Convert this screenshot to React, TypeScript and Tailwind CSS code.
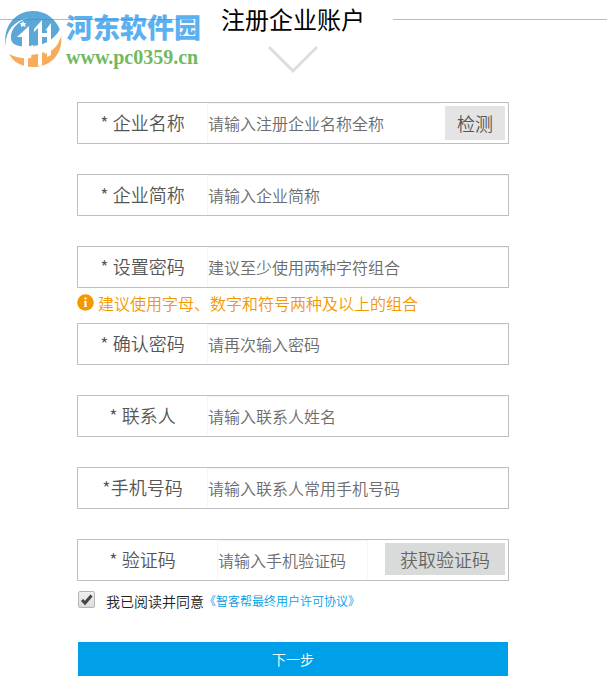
import type { ReactNode } from 'react'

type FieldProps = {
  id: string
  label: string
  placeholder: string
  type?: string
  short?: boolean
  children?: ReactNode
}

function Field({ id, label, placeholder, type = 'text', short = false, children }: FieldProps) {
  return (
    <div className="flex h-[42px] items-stretch border border-[#bfbfbf] bg-white">
      <label
        htmlFor={id}
        className={`flex w-[129px] shrink-0 items-center justify-center pb-0.5 text-lg text-[#555] ${short ? 'mr-[10px]' : ''}`}
      >
        {label}
      </label>
      <input
        id={id}
        type={type}
        placeholder={placeholder}
        className={`min-w-0 rounded-xs border-t border-l border-[#f5f5f5] pb-0.5 text-base text-[#555] outline-none placeholder:text-[#6c6c6c] ${short ? 'w-[151px] border-r' : 'flex-1'}`}
      />
      {children}
    </div>
  )
}

function SiteLogo() {
  return (
    <a href="#" className="absolute top-[11px] left-[5px] flex items-start">
      <svg width="57" height="57" viewBox="0 0 57 57" aria-hidden>
        {/* sky half */}
        <path d="M1 36C-3 16 10 0 28 0C41 0 51 8 55 19C53 27 47 34 36 37C22 41 8 41 1 36Z" fill="#5aa7d8" />
        {/* ground half */}
        <path d="M4 43C12 47 19 48 26 47L28 34H37L40 43C50 39 55 32 56 23C59 42 46 56 28 56C17 56 8 51 4 43Z" fill="#f7ac5c" />
        {/* left swoosh */}
        <path d="M23 7C11 11 5 20 6 28C7 35 16 36 25 35L28 34V41C21 43 8 44 1 37C-1 22 8 10 23 7Z" fill="#fff" />
        {/* river bend */}
        <path d="M24 36C36 35 49 30 55 18L57 23C54 34 45 42 26 44Z" fill="#fff" />
        {/* towers */}
        <path d="M17 37V26H12L24 15V37Z" fill="#fff" />
        <path d="M33 55V17L29 21V18L37 9V22H42V19L40 20L46 12V44L42 46V26H37V55Z" fill="#fff" />
        <path d="M19 44H23V57H19Z" fill="#fff" />
        <path d="M18 10L19 12L21 12L20 14L21 16L18 15L16 16L16 14L15 12H17Z" fill="#fff" />
      </svg>
      <span className="ml-1 flex flex-col">
        <span className="h-[34px] text-[27px] leading-[32px] font-black text-[#5db0f0]">河东软件园</span>
        <span className="font-['Liberation_Serif'] text-xl leading-6 font-bold text-[#71b95f]">www.pc0359.cn</span>
      </span>
    </a>
  )
}

export default function App() {
  return (
    <main className="relative bg-white pr-[21px] pb-5 font-['Noto_Sans_CJK_SC',sans-serif] font-[350]">
      <SiteLogo />
      <header>
        <div className="flex h-[38px] items-center">
          <div className="relative h-px flex-1 bg-[#777]/50" />
          <h1 className="w-[200px] text-center text-2xl leading-[38px] font-normal text-black">注册企业账户</h1>
          <div className="flex-1">
            <div className="-mr-[21px] h-px bg-[#bbb]" />
          </div>
        </div>
        <svg className="mx-auto mt-1.5" width="50" height="30" viewBox="0 0 50 30" aria-hidden>
          <path d="M1 3L25 27L49 3" fill="none" stroke="#ddd" strokeWidth="3" />
        </svg>
      </header>

      <form className="mx-auto mt-7 max-w-[432px]">
        <div className="flex flex-col gap-[30px]">
          <Field id="company" label="* 企业名称" placeholder="请输入注册企业名称全称">
            <button type="button" className="m-[3px] w-[60px] bg-[#e4e4e4] text-lg leading-none text-[#555]">
              检测
            </button>
          </Field>
          <Field id="short-name" label="* 企业简称" placeholder="请输入企业简称" />
          <Field id="password" label="* 设置密码" placeholder="建议至少使用两种字符组合" type="password" />
        </div>
        <p className="flex h-[35px] items-center gap-1 pb-1.5 text-base text-[#f39800]">
          <svg width="17" height="17" viewBox="0 0 17 17" aria-hidden>
            <circle cx="8.5" cy="8.5" r="8.3" fill="#f39800" />
            <path d="M7.5 3.5h2v2h-2zM7 7h2.500v5h.5v1h-3v-1h.5V8h-.5z" fill="#fff" />
          </svg>
          建议使用字母、数字和符号两种及以上的组合
        </p>
        <div className="flex flex-col gap-[30px]">
          <Field id="confirm" label="* 确认密码" placeholder="请再次输入密码" type="password" />
          <Field id="contact" label="* 联系人" placeholder="请输入联系人姓名" />
          <Field id="phone" label="*手机号码" placeholder="请输入联系人常用手机号码" type="tel" />
          <Field id="code" label="* 验证码" placeholder="请输入手机验证码" short>
            <button type="button" className="m-[3px] mb-[5px] ml-auto w-[120px] bg-[#d9dbda] text-lg leading-none text-[#666]">
              获取验证码
            </button>
          </Field>
        </div>

        <div className="mt-2 flex items-start text-sm leading-6 text-[#222]">
          <span className="relative mt-0.5 ml-px flex">
            <input
              id="agree"
              type="checkbox"
              defaultChecked
              className="peer size-[17px] appearance-none rounded-xs border border-[#b5b5b5] bg-linear-to-b from-[#f0f0f0] to-[#dcdcdc]"
            />
            <svg
              className="pointer-events-none absolute inset-0 hidden peer-checked:block"
              width="17"
              height="17"
              viewBox="0 0 17 17"
              aria-hidden
            >
              <path d="M4 9L7 12L13.5 4.5" fill="none" stroke="#444" strokeWidth="3" />
            </svg>
          </span>
          <label htmlFor="agree" className="ml-[11px]">我已阅读并同意</label>
          <a href="#" className="text-xs leading-6 text-[#00a0e9]">《智客帮最终用户许可协议》</a>
        </div>

        <div className="mt-[29px] px-px">
          <button type="submit" className="h-[34px] w-full bg-[#00a0e9] text-sm text-white">下一步</button>
        </div>
      </form>
    </main>
  )
}
